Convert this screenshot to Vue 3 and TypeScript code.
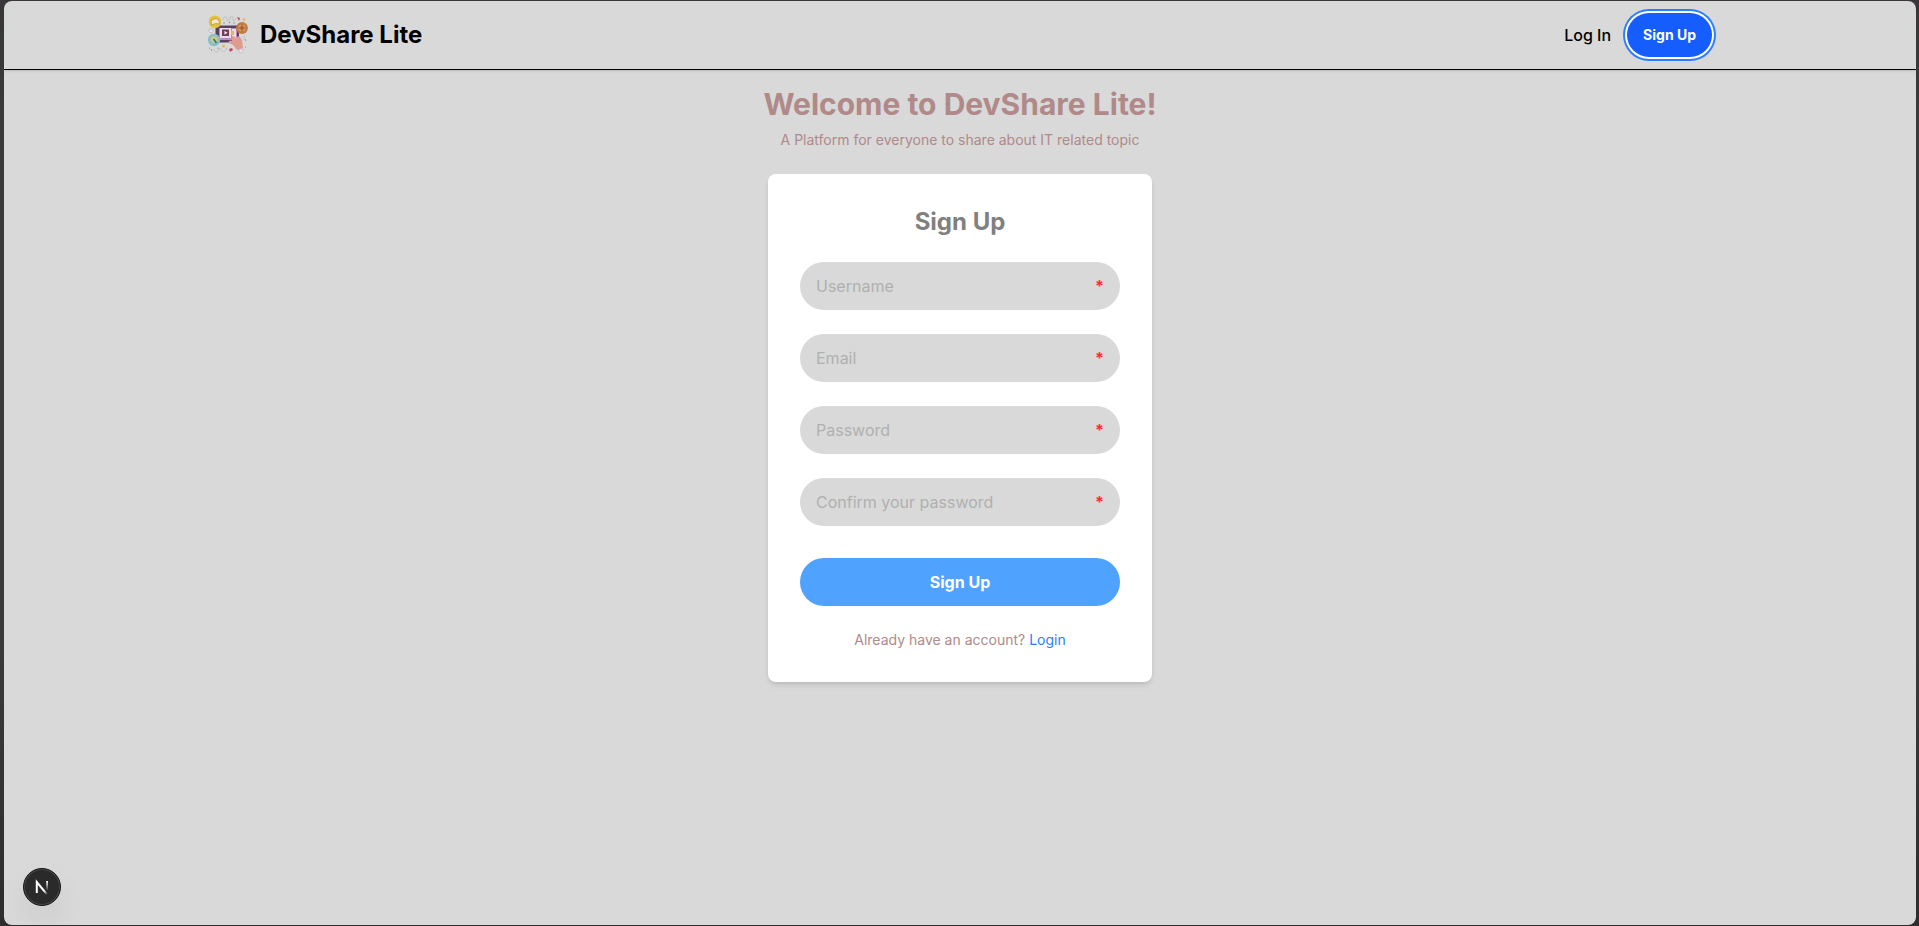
<script setup lang="ts">
import { reactive } from 'vue'

interface Field {
  key: 'username' | 'email' | 'password' | 'confirm'
  type: string
  placeholder: string
}

const fields: Field[] = [
  { key: 'username', type: 'text', placeholder: 'Username' },
  { key: 'email', type: 'email', placeholder: 'Email' },
  { key: 'password', type: 'password', placeholder: 'Password' },
  { key: 'confirm', type: 'password', placeholder: 'Confirm your password' },
]

const form = reactive({ username: '', email: '', password: '', confirm: '' })
</script>

<template>
  <div class="window">
    <div class="page">
      <header class="header">
        <div class="bar">
          <a class="brand">
            <svg class="logo" viewBox="0 0 40 40" aria-hidden="true">
              <g fill="none" stroke="#b7b6ba" stroke-width=".7">
                <path d="M15 5c0-4 4-4 4-1s3 2 3-1 4-2 3 1 3 2 3-1" />
                <path d="M6 34c0 4 5 4 5 0s3 5 6 2 0-5 2-1" />
                <circle cx="3" cy="15.500" r="2.200" fill="#eee" /><circle cx="33" cy="35.500" r="2.300" fill="#eee" />
                <path d="M1.500 15h3M31 35h4M36 20v5M5 29h3" />
              </g>
              <path d="M7.500 10.500h23.500v17H7.500z" fill="#58405f" />
              <path d="M11 13h18v12H11z" fill="#b98bc4" />
              <path d="M12 13h11v10H12z" fill="#ecdbe6" />
              <path d="M14 14.500h7v6.500h-7z" fill="#713d5d" />
              <path d="m16.500 16 3 1.700-3 1.700z" fill="#fff" />
              <path d="M24 14h4v9h-4z" fill="#e6dce8" />
              <path d="M23 16h3v4h-3z" fill="#ecb747" />
              <circle cx="7" cy="6.800" r="6.300" fill="#e3c23a" />
              <path d="m3 5.500 5-2 3 2 .500 3.500-4-.5-4 1.500z" fill="#f3e8c8" stroke="#9d8453" stroke-width=".6" />
              <circle cx="34" cy="13" r="5.900" fill="#c47a3e" />
              <circle cx="34" cy="13" r="3" fill="none" stroke="#dba06a" stroke-width="1.200" />
              <path d="M34 9v8M30.500 13h7" stroke="#91502d" stroke-width=".7" />
              <circle cx="6" cy="25" r="6.200" fill="#87bfca" />
              <circle cx="6" cy="24.600" r="3.400" fill="#d3c979" />
              <path d="m5.500 24 3 4" fill="none" stroke="#2f7185" stroke-width="1.600" />
              <path d="M24 24c-1-4 2-4 3-1l4-2 3 4 1 8-6 2-4-5-4-2c-1-2 1-3 3-2z" fill="#df9b8f" />
              <path d="m21 34 3-1 1 2-3 2zM29 2l3 1-1 3zM22 38l-1-3" fill="#b94a60" />
              <g fill="#e9b843"><circle cx="36" cy="4.500" r="1.300" /><circle cx="15.500" cy="31" r="1.500" /></g>
              <g fill="#8f8490">
                <circle cx="1.500" cy="33" r=".6" /><circle cx="3.500" cy="35" r=".7" />
                <circle cx="16" cy="8" r=".7" /><circle cx="21.500" cy="7.500" r=".7" />
                <circle cx="26" cy="8" r=".7" /><circle cx="37.500" cy="25" r=".7" />
                <circle cx="37.500" cy="32" r=".6" /><circle cx="10" cy="33" r=".6" />
              </g>
            </svg>
            <span class="name">DevShare Lite</span>
          </a>
          <nav class="nav">
            <a class="login">Log In</a>
            <a class="signup">Sign Up</a>
          </nav>
        </div>
      </header>

      <main class="main">
        <h1>Welcome to DevShare Lite!</h1>
        <p class="tagline">A Platform for everyone to share about IT related topic</p>
        <form class="card" @submit.prevent>
          <h2>Sign Up</h2>
          <div v-for="f in fields" :key="f.key" class="field">
            <input v-model="form[f.key]" :type="f.type" :placeholder="f.placeholder" />
            <span class="required">*</span>
          </div>
          <button class="submit" type="submit">Sign Up</button>
          <p class="switch">Already have an account? <a>Login</a></p>
        </form>
      </main>

      <div class="badge">
        <svg width="38" height="38" viewBox="0 0 38 38" aria-hidden="true">
          <defs>
            <linearGradient id="diag" x1="20" y1="19" x2="25" y2="26" gradientUnits="userSpaceOnUse">
              <stop offset=".4" stop-color="#fff" /><stop offset="1" stop-color="#fff" stop-opacity="0" />
            </linearGradient>
          </defs>
          <path d="M13.800 25V14L24.500 27" fill="none" stroke="url(#diag)" stroke-width="2" />
          <path d="M23.200 13h1.800v9h-1.800z" fill="url(#stem)" />
          <defs>
            <linearGradient id="stem" x1="0" y1="0" x2="0" y2="1">
              <stop stop-color="#fff" /><stop offset="1" stop-color="#fff" stop-opacity=".1" />
            </linearGradient>
          </defs>
        </svg>
      </div>
    </div>
  </div>
</template>

<style>
body {
  background: #3a3838;
}
</style>

<style scoped>
* {
  box-sizing: border-box;
  margin: 0;
}
.window {
  height: 100vh;
  padding: 1px 3px 1px 4px;
  background: linear-gradient(#39353a, #3c3a39 15%, #3c3a39 70%, #2e2c2d);
  font-family: Inter, "Liberation Sans", sans-serif;
  font-size: 16px;
  line-height: 24px;
  color: #000;
}
.page {
  position: relative;
  height: 100%;
  overflow: hidden;
  border-radius: 8px;
  background: #d9d9d9;
}
.header {
  height: 69px;
  border-bottom: 1px solid #000;
  box-shadow: 0 1px 3px rgb(0 0 0 / 10%), 0 1px 2px -1px rgb(0 0 0 / 10%);
}
.bar {
  display: flex;
  align-items: center;
  justify-content: space-between;
  width: 1536px;
  height: 68px;
  margin: 0 auto;
  padding: 0 16px;
}
.brand {
  display: flex;
  align-items: center;
  gap: 12px;
}
.logo {
  width: 40px;
  height: 40px;
}
.name {
  font-size: 24px;
  font-weight: 700;
  line-height: 32px;
}
.nav {
  display: flex;
  align-items: center;
  gap: 16px;
}
.login {
  font-weight: 500;
}
.signup {
  padding: 10px 16px;
  border-radius: 22px;
  background: #155dfc;
  box-shadow: 0 0 0 2px #fff, 0 0 0 4px #2b7fff;
  color: #fff;
  font-size: 14px;
  font-weight: 700;
}
.main {
  display: flex;
  flex-direction: column;
  align-items: center;
  padding-top: 16px;
}
h1 {
  color: #b08989;
  font-size: 30px;
  font-weight: 700;
  line-height: 36px;
}
.tagline {
  margin: 8px 0 24px;
  color: #b08989;
  font-size: 14px;
  line-height: 20px;
}
.card {
  width: 384px;
  padding: 32px;
  border-radius: 8px;
  background: #fff;
  box-shadow: 0 4px 6px -1px rgb(0 0 0 / 10%), 0 2px 4px -2px rgb(0 0 0 / 10%);
}
h2 {
  margin-bottom: 24px;
  color: #808080;
  font-size: 24px;
  font-weight: 700;
  line-height: 32px;
  text-align: center;
}
.field {
  display: flex;
  align-items: center;
  height: 48px;
  margin-bottom: 24px;
  padding: 0 16px;
  border-radius: 24px;
  background: #d9d9d9;
}
.field input {
  flex: 1;
  min-width: 0;
  height: 24px;
  padding: 0;
  border: 0;
  outline: 0;
  background: transparent;
  font: inherit;
}
.field input::placeholder {
  color: #b0b0b0;
}
.required {
  color: #fb2c36;
  font-weight: 700;
}
.submit {
  display: block;
  width: 100%;
  height: 48px;
  margin-top: 32px;
  border: 0;
  border-radius: 24px;
  background: #50a2ff;
  color: #fff;
  font: inherit;
  font-weight: 700;
}
.switch {
  margin-top: 24px;
  color: #b08989;
  font-size: 14px;
  line-height: 20px;
  text-align: center;
}
.switch a {
  color: #2b7fff;
}
.badge {
  position: absolute;
  bottom: 19px;
  left: 19px;
  width: 38px;
  height: 38px;
  border: 1px solid #171717;
  border-radius: 50%;
  background: #2a2a2a;
  box-shadow: inset 0 0 0 1px #494949, 0 16px 32px -8px rgb(0 0 0 / 18%);
}
.badge svg {
  display: block;
  margin: -1px;
}
</style>
